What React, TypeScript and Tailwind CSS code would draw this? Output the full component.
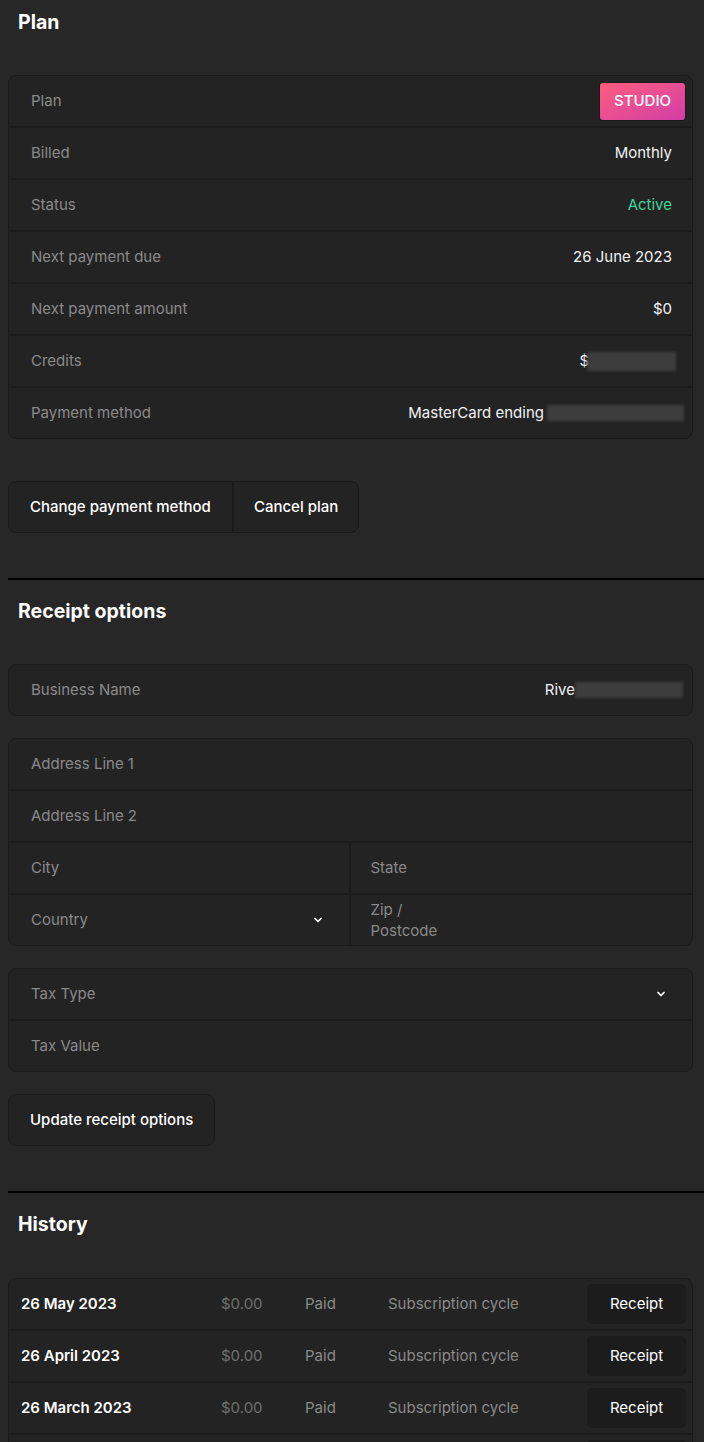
import React from "react";
import { ChevronDown } from "lucide-react";

const font = { fontFamily: "Inter, 'Noto Sans', sans-serif" };

const Redacted = ({ className }: { className: string }) => (
  <span className={`inline-block bg-[#3d3d3d] blur-[1.5px] ${className}`} />
);

const sep = "box-content border-b-2 border-[#1b1b1b]";

const Row = ({
  label,
  children,
  last,
}: {
  label: string;
  children: React.ReactNode;
  last?: boolean;
}) => (
  <div
    className={`flex h-[50px] items-center justify-between pl-[22px] pr-[20px] ${
      last ? "" : sep
    }`}
  >
    <span className="text-[#8a8a8a]">{label}</span>
    <span className="flex items-center text-[#f2f2f2]">{children}</span>
  </div>
);

const Card = ({ children }: { children: React.ReactNode }) => (
  <div className="overflow-hidden rounded-lg border border-[#1b1b1b] bg-[#232323]">
    {children}
  </div>
);

const Heading = ({ children }: { children: React.ReactNode }) => (
  <h2 className="mb-[39px] pl-[10px] text-[19.5px] leading-7 font-bold text-white">
    {children}
  </h2>
);

const history = ["26 May 2023", "26 April 2023", "26 March 2023", "26 February 2023"];

export default function App() {
  return (
    <div
      style={font}
      className="min-h-[1442px] bg-[#272727] pt-2 pb-10 text-[15px] antialiased"
    >
      {/* Plan */}
      <section className="pl-2 pr-[11px]">
        <Heading>Plan</Heading>
        <Card>
          <div className={`flex h-[50px] items-center justify-between pl-[22px] pr-[7px] ${sep}`}>
            <span className="text-[#8a8a8a]">Plan</span>
            <span className="flex h-[37px] items-center rounded-[3px] bg-gradient-to-br from-[#ff5c7c] to-[#d23ca6] px-[14px] font-medium text-white shadow-[0_0_0_1px_#1b1b1b]">
              STUDIO
            </span>
          </div>
          <Row label="Billed">Monthly</Row>
          <Row label="Status">
            <span className="text-[#3ed39a]">Active</span>
          </Row>
          <Row label="Next payment due">26 June 2023</Row>
          <Row label="Next payment amount">$0</Row>
          <Row label="Credits">
            $<Redacted className="-ml-[2px] mr-[-4px] h-[19px] w-[89px]" />
          </Row>
          <Row label="Payment method" last>
            MasterCard ending
            <Redacted className="mr-[-12px] ml-[3px] h-[16px] w-[137px]" />
          </Row>
        </Card>

        <div className="mt-[42px] inline-flex h-[52px] overflow-hidden rounded-lg border border-[#1b1b1b] bg-[#232323] font-medium text-white">
          <button className="border-r-2 border-[#1b1b1b] px-[21px]">
            Change payment method
          </button>
          <button className="px-[20px]">Cancel plan</button>
        </div>
      </section>

      <div className="mt-[45px] ml-2 h-[2px] bg-black" />

      {/* Receipt options */}
      <section className="mt-[17px] pl-2 pr-[11px]">
        <Heading>Receipt options</Heading>
        <Card>
          <Row label="Business Name" last>
            Rive
            <Redacted className="mr-[-11px] h-[16px] w-[108px]" />
          </Row>
        </Card>

        <div className="mt-[22px]">
          <Card>
            <div className={`flex h-[50px] items-center pl-[22px] text-[#8a8a8a] ${sep}`}>
              Address Line 1
            </div>
            <div className={`flex h-[50px] items-center pl-[22px] text-[#8a8a8a] ${sep}`}>
              Address Line 2
            </div>
            <div className={`grid grid-cols-2 ${sep}`}>
              <div className="flex h-[50px] items-center border-r-2 border-[#1b1b1b] pl-[22px] text-[#8a8a8a]">
                City
              </div>
              <div className="flex h-[50px] items-center pl-[20px] text-[#8a8a8a]">
                State
              </div>
            </div>
            <div className="grid grid-cols-2">
              <div className="flex h-[50px] items-center justify-between border-r-2 border-[#1b1b1b] pl-[22px] pr-[25px] text-[#8a8a8a]">
                Country
                <ChevronDown size={12} strokeWidth={3.5} className="text-white" />
              </div>
              <div className="flex h-[50px] flex-col justify-center pl-[20px] leading-[21px] text-[#8a8a8a]">
                <span>Zip /</span>
                <span>Postcode</span>
              </div>
            </div>
          </Card>
        </div>

        <div className="mt-[22px]">
          <Card>
            <div className={`flex h-[50px] items-center justify-between pl-[22px] pr-[25px] text-[#8a8a8a] ${sep}`}>
              Tax Type
              <ChevronDown size={12} strokeWidth={3.5} className="text-white" />
            </div>
            <div className="flex h-[50px] items-center pl-[22px] text-[#8a8a8a]">
              Tax Value
            </div>
          </Card>
        </div>

        <button className="mt-[22px] h-[52px] rounded-lg border border-[#1b1b1b] bg-[#232323] px-[21px] font-medium text-white">
          Update receipt options
        </button>
      </section>

      <div className="mt-[45px] ml-2 h-[2px] bg-black" />

      {/* History */}
      <section className="mt-[17px] pl-2 pr-[11px]">
        <h2 className="mb-[40px] pl-[10px] text-[19.5px] leading-7 font-bold text-white">
          History
        </h2>
        <Card>
          {history.map((date, i) => (
            <div
              key={date}
              className={`grid h-[50px] grid-cols-[200px_84px_83px_1fr_auto] items-center pl-3 pr-[6px] ${
                i < history.length - 1 ? sep : ""
              }`}
            >
              <span className="font-semibold text-white">{date}</span>
              <span className="text-[#6f6f6f]">$0.00</span>
              <span className="text-[#8a8a8a]">Paid</span>
              <span className="text-[#8a8a8a]">Subscription cycle</span>
              <button className="h-[40px] w-[99px] rounded-[5px] bg-[#1c1c1c] text-white">
                Receipt
              </button>
            </div>
          ))}
        </Card>
      </section>
    </div>
  );
}
